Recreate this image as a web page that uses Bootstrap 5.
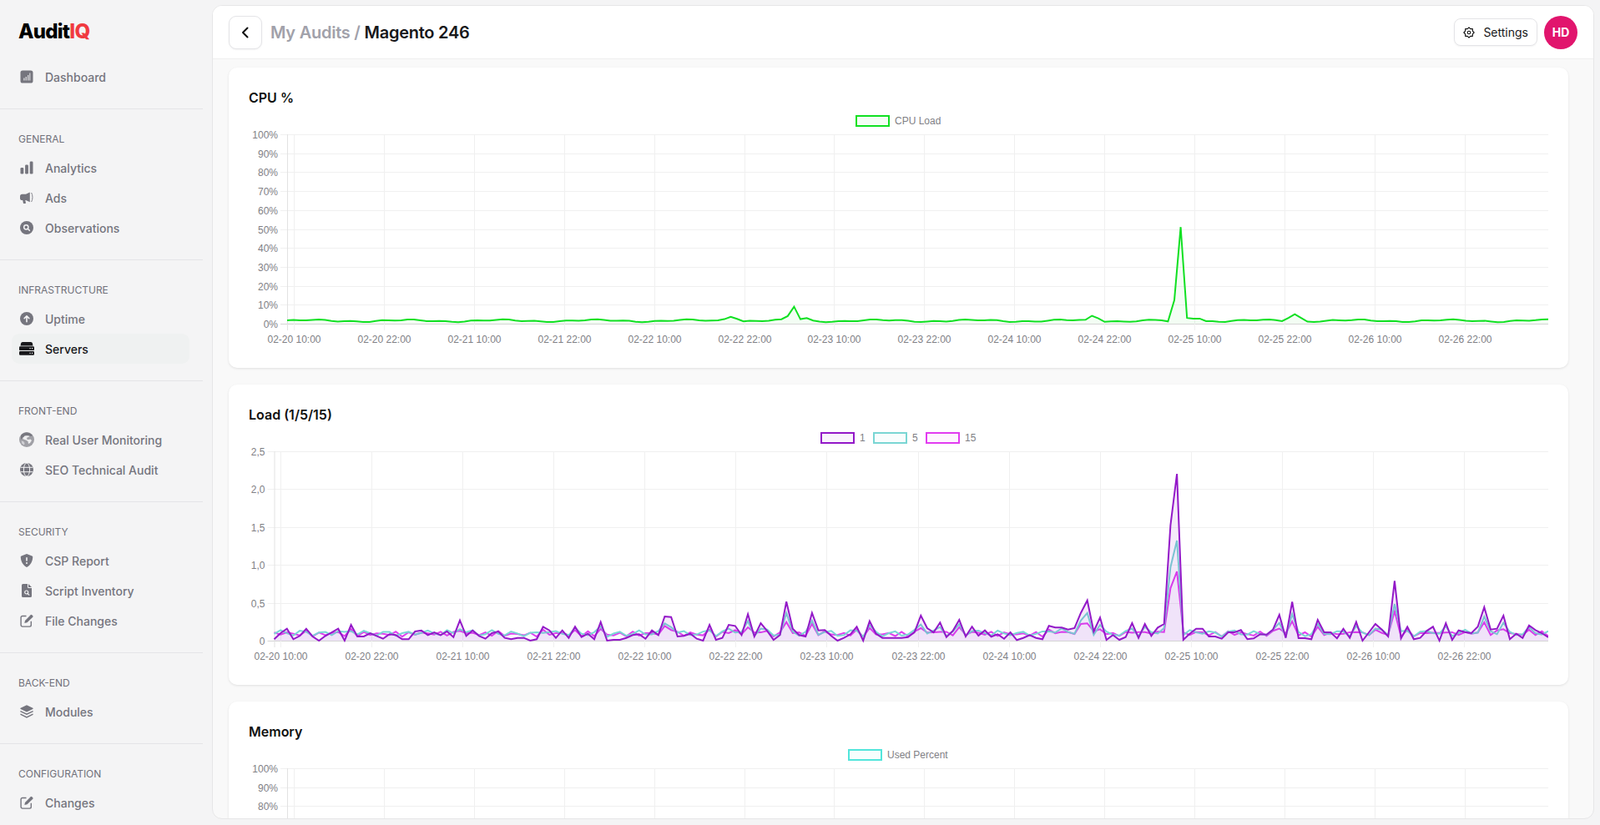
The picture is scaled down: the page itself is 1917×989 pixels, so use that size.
<!DOCTYPE html>
<html lang="en">
<head>
    <meta charset="UTF-8">
    <meta name="viewport" content="width=device-width, initial-scale=1.0">
    <title>AuditIQ - Magento 246</title>
    <link href="https://cdn.jsdelivr.net/npm/bootstrap@5.3.0/dist/css/bootstrap.min.css" rel="stylesheet">
    <style>
        body {
            background: #f4f4f5;
            font-family: "Inter", "Liberation Sans", sans-serif;
            color: #18181b;
        }
        .sidebar {
            width: 254px;
            height: 100vh;
        }
        .logo-row {
            height: 74px;
            padding-left: 22px;
            padding-top: 1px;
        }
        .logo {
            font-size: 24px;
            font-weight: 800;
            letter-spacing: -0.75px;
            color: #000;
            line-height: 1;
        }
        .logo span { color: #f03a40; }
        .side-gap { height: 20px; flex-shrink: 0; }
        .side-hr {
            width: 243px;
            height: 1px;
            background: #e4e4e7;
            flex-shrink: 0;
        }
        .side-section { padding: 27px 0 20px; flex-shrink: 0; }
        .side-title {
            font-size: 12px;
            line-height: 18px;
            color: #71717a;
            padding-left: 22px;
            margin-bottom: 7px;
        }
        .side-link {
            height: 36px;
            width: 213px;
            margin-left: 14px;
            padding-left: 10px;
            border-radius: 9px;
            font-size: 14px;
            font-weight: 500;
            color: #75757e;
            text-decoration: none;
        }
        .side-link.active { background: #eff1f1; color: #18181b; }
        .side-icon {
            width: 16px;
            height: 16px;
            margin-right: 14px;
            flex-shrink: 0;
            fill: currentColor;
        }
        .side-icon.wide {
            width: 18px;
            height: 18px;
            margin-left: -1px;
            margin-right: 13px;
        }
        .panel {
            margin: 6px 7px 7px 0;
            background: #f9f9f9;
            border: 1px solid #e6e6e7;
            border-radius: 12px;
            min-width: 0;
        }
        .panel-head {
            height: 64px;
            padding: 0 19px;
            background: #fff;
            border-bottom: 1px solid #efefef;
            flex-shrink: 0;
        }
        .back-btn {
            width: 40px;
            height: 40px;
            padding: 0;
            border: 1px solid #e4e4e7;
            border-radius: 9px;
            background: #fff;
            box-shadow: 0 1px 2px rgba(0, 0, 0, .05);
        }
        .crumbs {
            margin-left: 10px;
            font-size: 20px;
            font-weight: 600;
            letter-spacing: -0.25px;
            color: #a1a1aa;
        }
        .crumbs b { font-weight: 600; color: #18181b; }
        .settings-btn {
            height: 33px;
            padding: 0 10px;
            gap: 10px;
            font-size: 14px;
            color: #18181b;
            border: 1px solid #e4e4e7;
            border-radius: 8px;
            background: #fff;
            box-shadow: 0 1px 2px rgba(0, 0, 0, .05);
        }
        .avatar {
            width: 40px;
            height: 40px;
            margin-left: 8px;
            background: #e1156d;
            color: #fff;
            font-size: 14px;
            font-weight: 700;
        }
        .panel-body {
            padding: 10px 30px 0 19px;
            gap: 20px;
            min-height: 0;
        }
        .chart-card {
            height: 360px;
            padding: 24px;
            border: 0;
            border-radius: 10px;
            box-shadow: 0 1px 3px rgba(0, 0, 0, .1);
            flex-shrink: 0;
        }
        .chart-card h2 {
            font-size: 16px;
            font-weight: 600;
            line-height: 24px;
            margin: 0;
            color: #111;
        }
        .chart-card svg { display: block; }
        .chart-card svg text {
            font-family: "Liberation Sans", Arial, sans-serif;
            font-size: 12px;
            fill: #808085;
        }
    </style>
</head>
<body class="d-flex vh-100 overflow-hidden">
    <svg class="d-none">
        <symbol id="i-dash" viewBox="0 0 16 16"><rect x=".5" y=".5" width="15" height="15" rx="2.6"/><path fill="#f4f4f5" opacity=".75" d="M4.200 9.500h1.400v3H4.200zM6.600 8h1.400v4.500H6.600zM9 6h1.400v6.500H9zM11.200 3.600h1.200v8.900h-1.200z"/></symbol>
        <symbol id="i-bars" viewBox="0 0 16 16"><rect x=".5" y="8" width="3.800" height="7.500" rx="1.300"/><rect x="6.100" y="4.400" width="3.800" height="11.100" rx="1.300"/><rect x="11.700" y=".5" width="3.800" height="15" rx="1.300"/></symbol>
        <symbol id="i-horn" viewBox="0 0 16 16"><path d="M2.600 3.700H7L11.800 1.600v11.600L7 11H6.300l.6 3a.8.8 0 0 1-.8 1H4.700a.8.8 0 0 1-.8-.6L3.200 11H2.600A2.600 2.600 0 0 1 0 8.400V6.300a2.600 2.600 0 0 1 2.600-2.600z"/><path d="M13.600 2c1.800 3 1.800 8 0 11" fill="none" stroke="currentColor" stroke-width=".9"/></symbol>
        <symbol id="i-search" viewBox="0 0 16 16"><circle cx="8" cy="8" r="8"/><circle cx="7.300" cy="7.300" r="2.600" fill="none" stroke="#f4f4f5" stroke-width="1.500"/><path d="M9.300 9.300l2 2" stroke="#f4f4f5" stroke-width="1.600" stroke-linecap="round"/></symbol>
        <symbol id="i-up" viewBox="0 0 16 16"><circle cx="8" cy="8" r="8"/><path d="M8 11.800V5M5.200 7.600 8 4.800l2.800 2.800" fill="none" stroke="#f4f4f5" stroke-width="1.600" stroke-linecap="round" stroke-linejoin="round"/></symbol>
        <symbol id="i-server" viewBox="0 0 18 18"><path d="M4 1h10a2 2 0 0 1 1.900 1.500L16.500 5.500h-15l.6-3A2 2 0 0 1 4 1z"/><rect y="6.300" width="18" height="4.800" rx="1.200"/><rect y="12" width="18" height="4.700" rx="1.300"/><path fill="#eff1f1" d="M12.500 8h1.200v1.200h-1.200zM15 8h1.200v1.200H15zM12.500 13.700h1.200v1.200h-1.200zM15 13.700h1.200v1.200H15z"/></symbol>
        <symbol id="i-earth" viewBox="0 0 18 18"><circle cx="9" cy="9" r="9" fill="#a0a0a6"/><path fill="#77777f" d="M2 4c3-4.500 10-5 14 0l-2 1-3-1-2 1-3 0-2 2-2 2z"/><path fill="#eeeeef" d="M7 4.500c2-.6 4-.4 5.500.5l-1.500 1-1.500.5-.5 2 2 .5 2.500-.5 1.500 1.500-2 3-2 1-.5-3-2.500-1.500-3-1-1-1.500 1.500-1 1-1.500z"/><path fill="#d0d0d4" d="M2.500 10.500l2.500 .5 1.500 2-.5 2.500-2.500-1.500z"/></symbol>
        <symbol id="i-globe" viewBox="0 0 16 16"><circle cx="8" cy="8" r="8"/><g fill="none" stroke="#f4f4f5" stroke-width="1"><ellipse cx="8" cy="8" rx="3.600" ry="8"/><path d="M.6 5.300h14.800M.6 10.700h14.800"/></g></symbol>
        <symbol id="i-shield" viewBox="0 0 16 16"><path d="M8 0l6.400 2.500c.5.2.8.6.8 1.100C15.200 8.700 12.800 13.700 8 16 3.200 13.700.8 8.700.8 3.600c0-.5.3-.9.8-1.100z"/><rect x="7.200" y="4" width="1.600" height="4.800" rx=".8" fill="#f4f4f5"/><circle cx="8" cy="11" r="1" fill="#f4f4f5"/></symbol>
        <symbol id="i-file" viewBox="0 0 16 16"><path d="M3.500 0H9v3.800A1.200 1.200 0 0 0 10.200 5H14v9.500a1.500 1.500 0 0 1-1.500 1.500h-9A1.500 1.500 0 0 1 2 14.500v-13A1.500 1.500 0 0 1 3.500 0z"/><path d="M10 0l4 4h-4z"/><circle cx="7.700" cy="10" r="2" fill="none" stroke="#f4f4f5" stroke-width="1.200"/><path d="M9.200 11.500l1.600 1.600" stroke="#f4f4f5" stroke-width="1.300" stroke-linecap="round"/></symbol>
        <symbol id="i-edit" viewBox="0 0 16 16"><path d="M7.500 2.500H2.900A1.800 1.800 0 0 0 1.100 4.300v9a1.800 1.800 0 0 0 1.800 1.800h8.600a1.800 1.800 0 0 0 1.800-1.800V8.800" fill="none" stroke="currentColor" stroke-width="1.400"/><path d="M5.300 11l.7-3.100L12.700 1.200a1.100 1.100 0 0 1 1.500 0l1.100 1.100a1.100 1.100 0 0 1 0 1.500L8.500 10.300z"/></symbol>
        <symbol id="i-layers" viewBox="0 0 16 16"><path d="M8 .3l7.300 3.500c.5.300.5.900 0 1.100L8 8.500.7 4.900c-.5-.2-.5-.8 0-1.100z"/><path d="M1 7.800l7 3.400 7-3.400M1 11.300l7 3.500 7-3.500" fill="none" stroke="currentColor" stroke-width="1.500" stroke-linecap="round"/></symbol>
    </svg>

    <aside class="sidebar d-flex flex-column flex-shrink-0 overflow-hidden">
        <div class="logo-row d-flex align-items-center flex-shrink-0"><div class="logo">Audit<span>IQ</span></div></div>
        <a class="side-link d-flex align-items-center flex-shrink-0" href="#"><svg class="side-icon"><use href="#i-dash"/></svg>Dashboard</a>
        <div class="side-gap"></div>
        <div class="side-hr"></div>
        <div class="side-section">
            <div class="side-title">GENERAL</div>
            <a class="side-link d-flex align-items-center" href="#"><svg class="side-icon"><use href="#i-bars"/></svg>Analytics</a>
            <a class="side-link d-flex align-items-center" href="#"><svg class="side-icon"><use href="#i-horn"/></svg>Ads</a>
            <a class="side-link d-flex align-items-center" href="#"><svg class="side-icon"><use href="#i-search"/></svg>Observations</a>
        </div>
        <div class="side-hr"></div>
        <div class="side-section">
            <div class="side-title">INFRASTRUCTURE</div>
            <a class="side-link d-flex align-items-center" href="#"><svg class="side-icon"><use href="#i-up"/></svg>Uptime</a>
            <a class="side-link active d-flex align-items-center" href="#"><svg class="side-icon wide"><use href="#i-server"/></svg>Servers</a>
        </div>
        <div class="side-hr"></div>
        <div class="side-section">
            <div class="side-title">FRONT-END</div>
            <a class="side-link d-flex align-items-center" href="#"><svg class="side-icon wide"><use href="#i-earth"/></svg>Real User Monitoring</a>
            <a class="side-link d-flex align-items-center" href="#"><svg class="side-icon"><use href="#i-globe"/></svg>SEO Technical Audit</a>
        </div>
        <div class="side-hr"></div>
        <div class="side-section">
            <div class="side-title">SECURITY</div>
            <a class="side-link d-flex align-items-center" href="#"><svg class="side-icon"><use href="#i-shield"/></svg>CSP Report</a>
            <a class="side-link d-flex align-items-center" href="#"><svg class="side-icon"><use href="#i-file"/></svg>Script Inventory</a>
            <a class="side-link d-flex align-items-center" href="#"><svg class="side-icon"><use href="#i-edit"/></svg>File Changes</a>
        </div>
        <div class="side-hr"></div>
        <div class="side-section">
            <div class="side-title">BACK-END</div>
            <a class="side-link d-flex align-items-center" href="#"><svg class="side-icon"><use href="#i-layers"/></svg>Modules</a>
        </div>
        <div class="side-hr"></div>
        <div class="side-section">
            <div class="side-title">CONFIGURATION</div>
            <a class="side-link d-flex align-items-center" href="#"><svg class="side-icon"><use href="#i-edit"/></svg>Changes</a>
        </div>
    </aside>

    <main class="panel flex-grow-1 d-flex flex-column overflow-hidden">
        <header class="panel-head d-flex align-items-center">
            <button class="back-btn btn d-flex align-items-center justify-content-center" type="button" aria-label="Back">
                <svg width="10" height="14" viewBox="0 0 10 14"><path d="M7.500 1.500 2 7l5.500 5.500" fill="none" stroke="#111" stroke-width="2" stroke-linecap="round" stroke-linejoin="round"/></svg>
            </button>
            <div class="crumbs">My Audits / <b>Magento 246</b></div>
            <button class="settings-btn btn d-flex align-items-center ms-auto" type="button">
                <svg width="14" height="14" viewBox="0 0 16 16"><path d="M8 1l2.070 2.010 2.880.04.040 2.880L15 8l-2.010 2.070-.040 2.880-2.880.04L8 15l-2.070-2.010-2.880-.04-.040-2.880L1 8l2.010-2.070.040-2.880 2.880-.04z" fill="none" stroke="#111" stroke-width="1.300" stroke-linejoin="round"/><circle cx="8" cy="8" r="2" fill="none" stroke="#111" stroke-width="1.300"/></svg>
                Settings
            </button>
            <div class="avatar rounded-circle d-flex align-items-center justify-content-center">HD</div>
        </header>
        <div class="panel-body d-flex flex-column flex-grow-1 overflow-hidden">
            <section class="chart-card card">
                <h2>CPU %</h2>
                <div id="chart-cpu"></div>
            </section>
            <section class="chart-card card">
                <h2>Load (1/5/15)</h2>
                <div id="chart-load"></div>
            </section>
            <section class="chart-card card">
                <h2>Memory</h2>
                <div id="chart-memory"></div>
            </section>
        </div>
    </main>

    <script>
        const WIDTH = 1557, HEIGHT = 288, TOP = 32, BOTTOM = 259, RIGHT = 1557;
        const DATES = ['02-20', '02-21', '02-22', '02-23', '02-24', '02-25', '02-26'];
        const POINTS = 200;

        // x axis: 14 ticks, one every 12 hours
        const xLabels = [];
        DATES.forEach(d => { xLabels.push(d + ' 10:00', d + ' 22:00'); });

        const PCT = ['0%', '10%', '20%', '30%', '40%', '50%', '60%', '70%', '80%', '90%', '100%'];
        const LOADS = ['0', '0,5', '1,0', '1,5', '2,0', '2,5'];

        // cpu load in percent, a low wavy base with a few spikes
        const cpu = [];
        for (let i = 0; i < POINTS; i++) {
            cpu.push(1.55 + 0.5 * Math.sin(i * 0.42) + 0.3 * Math.sin(i * 1.3 + 1));
        }
        Object.assign(cpu, {
            69: 2.4, 70: 3.6, 71: 2.5, 79: 4, 80: 9, 81: 2.4, 82: 3, 127: 4.2, 128: 2.8,
            139: 1.2, 140: 12.4, 141: 51, 142: 3, 143: 2.6, 144: 2.7, 158: 3, 159: 5, 160: 3
        });

        // 1 minute load
        const load1 = [860, 838, 822, 860, 848, 822, 850, 865, 848, 835, 822, 865, 808, 850, 850, 838, 848, 858, 842, 845,
            860, 860, 832, 828, 845, 835, 845, 832, 852, 792, 848, 828, 848, 858, 838, 832, 855, 860, 855, 855,
            865, 860, 815, 828, 855, 828, 855, 815, 852, 840, 860, 798, 865, 862, 862, 855, 845, 842, 858, 828,
            845, 778, 780, 850, 848, 840, 858, 865, 808, 862, 855,
            808, 812, 845, 770, 850, 802, 830, 862, 845, 725, 822, 845, 850, 765, 828, 827, 848, 865, 855,
            842, 815, 865, 795, 840, 855, 855, 855, 855, 852, 835, 775, 820, 835, 800, 852, 830, 790, 850, 815,
            847, 828, 851, 842, 858, 835, 863, 855, 845, 855, 860, 812, 818, 818, 825, 820, 765, 720, 832, 782,
            862, 845, 862, 852, 802, 855, 805, 848, 818, 805, 450, 265,
            862, 840, 822, 822, 850, 850, 858, 835, 835, 827, 860, 857, 842, 843, 825, 772, 855, 725, 856, 856,
            860, 790, 835, 835, 857, 822, 855, 798, 865, 835, 805, 825, 850, 650, 857, 815, 860, 855, 830, 815,
            865, 802, 862, 828, 834, 838, 815, 745, 825, 822, 775, 860, 840, 855, 810, 827, 838, 853]
            .map(v => (865 - v) / 272.4);

        // 5 and 15 minute loads follow the 1 minute load, flatter
        const load5 = load1.map((v, i) => (v < 0.15 ? 0.085 + 0.2 * v : 0.115 + 0.6 * (v - 0.15)) + 0.035 * Math.sin(i * 1.9));
        const load15 = load1.map((v, i) => (v < 0.15 ? 0.08 + 0.15 * v : 0.1025 + 0.41 * (v - 0.15)) + 0.03 * Math.sin(i * 2.7 + 1));

        function drawChart(id, opt) {
            const x0 = opt.x0, n = xLabels.length;
            const height = opt.height || HEIGHT;
            const yOf = v => BOTTOM - (BOTTOM - TOP) * v / opt.max;
            const xOf = i => x0 + (RIGHT - x0) * i / (POINTS - 1);
            let s = `<svg width="${WIDTH}" height="${height}" viewBox="0 0 ${WIDTH} ${height}">`;

            opt.legend.forEach(l => {
                s += `<rect x="${l.x + 1}" y="10" width="39" height="12" fill="${l.color}" fill-opacity=".05" stroke="${l.color}" stroke-width="2"/>`;
                s += `<text x="${l.x + 47}" y="20">${l.label}</text>`;
            });

            opt.yLabels.forEach((label, k) => {
                const y = Math.round(BOTTOM - (BOTTOM - TOP) * k / (opt.yLabels.length - 1)) + 0.5;
                if (y > height - 6) return; // below the fold of the panel
                s += `<line x1="${x0 - 8}" x2="${RIGHT}" y1="${y}" y2="${y}" stroke="${k ? '#f0f0f0' : '#d4d4d4'}"/>`;
                s += `<text x="${x0 - 11}" y="${y + 4}" text-anchor="end">${label}</text>`;
            });

            s += `<line x1="${x0 + 0.5}" x2="${x0 + 0.5}" y1="${TOP}" y2="${BOTTOM + 8}" stroke="#e2e2e2"/>`;
            for (let k = 0; k < n; k++) {
                const x = Math.round(opt.tick0 + opt.tickStep * k) + 0.5;
                s += `<line x1="${x}" x2="${x}" y1="${TOP}" y2="${BOTTOM + 8}" stroke="#f0f0f0"/>`;
                if (BOTTOM + 23 < height) s += `<text x="${x}" y="${BOTTOM + 23}" text-anchor="middle">${xLabels[k]}</text>`;
            }

            opt.series.forEach(sr => {
                const pts = sr.data.map((v, i) => `${xOf(i).toFixed(1)},${yOf(v).toFixed(1)}`);
                s += `<polygon points="${x0},${BOTTOM} ${pts.join(' ')} ${RIGHT},${BOTTOM}" fill="${sr.color}" fill-opacity="${sr.fill}"/>`;
                s += `<polyline points="${pts.join(' ')}" fill="none" stroke="${sr.color}" stroke-width="2"/>`;
            });

            document.getElementById(id).innerHTML = s + '</svg>';
        }

        document.addEventListener('DOMContentLoaded', () => {
            drawChart('chart-cpu', {
                x0: 46, tick0: 54, tickStep: 107.9, max: 100, yLabels: PCT,
                legend: [{ x: 727, color: '#10e022', label: 'CPU Load' }],
                series: [{ data: cpu, color: '#10e022', fill: .05 }]
            });
            drawChart('chart-load', {
                x0: 30.5, tick0: 38, tickStep: 109.08, max: 2.5, yLabels: LOADS,
                legend: [
                    { x: 685, color: '#9318c8', label: '1' },
                    { x: 748, color: '#7ad6d4', label: '5' },
                    { x: 811, color: '#e23cf0', label: '15' }
                ],
                series: [
                    { data: load15, color: '#e23cf0', fill: .03 },
                    { data: load5, color: '#7ad6d4', fill: .03 },
                    { data: load1, color: '#9318c8', fill: .09 }
                ]
            });
            // only the top of the memory chart fits in the panel
            drawChart('chart-memory', {
                x0: 46, tick0: 54, tickStep: 107.9, max: 100, yLabels: PCT, height: 92,
                legend: [{ x: 718, color: '#52e5db', label: 'Used Percent' }],
                series: []
            });
        });
    </script>
</body>
</html>
